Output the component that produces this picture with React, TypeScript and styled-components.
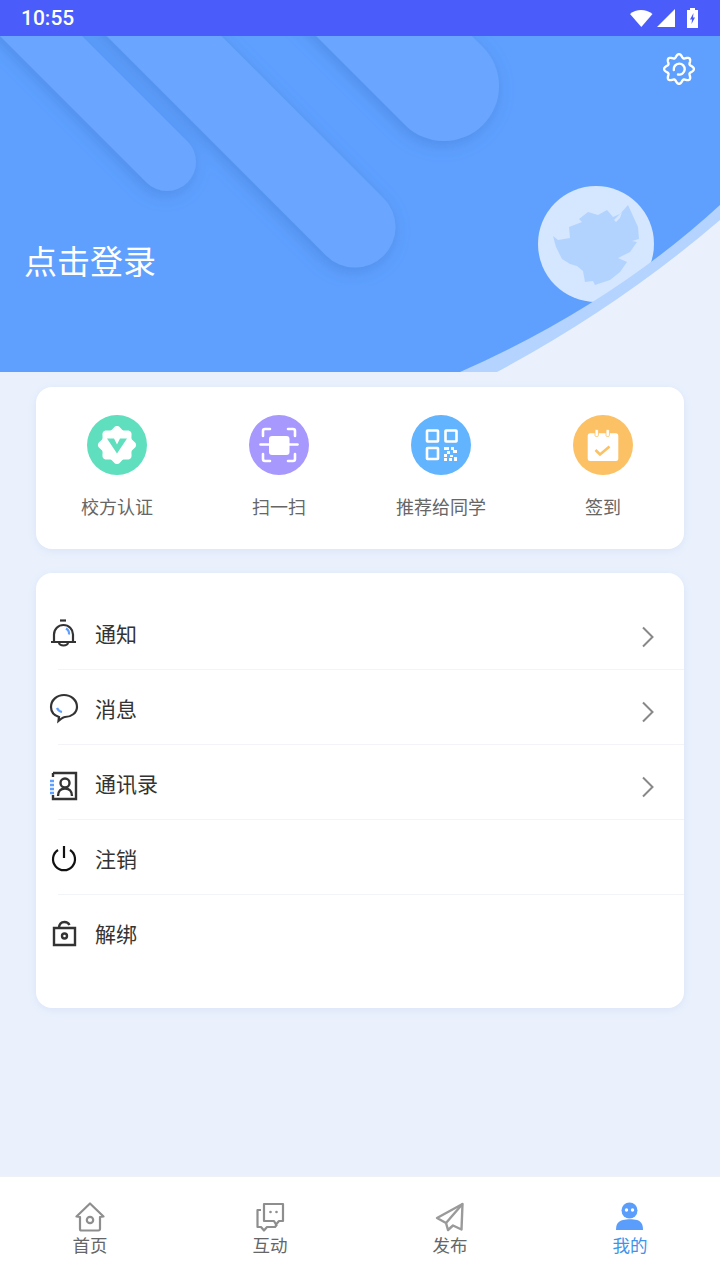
import React from "react";
import styled, { createGlobalStyle } from "styled-components";

const GlobalStyle = createGlobalStyle`
    html, body {
        margin: 0;
        padding: 0;
        background: #eaf1fd;
        font-family: "Noto Sans CJK SC", "Noto Sans", sans-serif;
    }
`

const Page = styled.div`
    width: 720px;
    height: 1280px;
    display: flex;
    flex-direction: column;
    background: #eaf1fd;
    overflow: hidden;
`

const StatusBar = styled.div`
    height: 36px;
    flex: none;
    display: flex;
    align-items: center;
    justify-content: space-between;
    padding: 0 22px 0 21px;
    background: #4a5cf9;
    color: #fff;
    font: 500 21px "Roboto", sans-serif;
`

const StatusIcons = styled.div`
    display: flex;
    align-items: center;
`

const Hero = styled.div`
    position: relative;
    height: 336px;
    flex: none;
    display: flex;
    flex-direction: column;
    align-items: flex-start;
    box-sizing: border-box;
    padding: 17px 25px 0 24px;
    background: #5fa0ff;
    overflow: hidden;
`

const HeroArt = styled.svg`
    position: absolute;
    left: 0;
    top: 0;
`

const SettingsIcon = styled.svg`
    position: relative;
    align-self: flex-end;
`

const LoginTitle = styled.div`
    position: relative;
    margin-top: 151px;
    font-size: 33px;
    line-height: 48px;
    color: #fff;
`

const Card = styled.div`
    margin: 0 36px;
    background: #fff;
    border-radius: 16px;
    box-shadow: 0 2px 8px rgba(90, 130, 200, 0.1);
`

const ActionsCard = styled(Card)`
    margin-top: 15px;
    height: 162px;
    box-sizing: border-box;
    padding-top: 28px;
    display: grid;
    grid-template-columns: repeat(4, 1fr);
`

const Action = styled.div`
    display: flex;
    flex-direction: column;
    align-items: center;
`

const ActionLabel = styled.div`
    margin-top: 18px;
    font-size: 18px;
    line-height: 26px;
    color: #666;
`

const ListCard = styled(Card)`
    margin-top: 24px;
    height: 435px;
    box-sizing: border-box;
    padding: 27px 0 0 14px;
`

const Row = styled.div`
    height: 69px;
    display: flex;
    align-items: center;
    padding-right: 29px;
`

const RowGap = styled.div`
    height: 5px;
`

const RowIcon = styled.svg`
    flex: none;
    margin-right: 17px;
    overflow: visible;
`

const RowLabel = styled.div`
    flex: 1;
    margin-top: -3px;
    font-size: 21px;
    line-height: 30px;
    color: #333;
`

const RowArrow = styled.svg`
    margin-top: 4px;
`

const Divider = styled.div`
    height: 1px;
    margin-left: 8px;
    background: #f3f4f7;
`

const BottomNav = styled.div`
    margin-top: auto;
    height: 104px;
    flex: none;
    box-sizing: border-box;
    padding-top: 25px;
    display: grid;
    grid-template-columns: repeat(4, 1fr);
    background: #fff;
    border-top: 1px solid #f0f1f4;
`

const NavItem = styled.div`
    display: flex;
    flex-direction: column;
    align-items: center;
`

const NavLabel = styled.div<{ $active?: boolean }>`
    margin-top: 1px;
    font-size: 17.5px;
    line-height: 24px;
    color: ${(p) => (p.$active ? "#3f94e9" : "#666")};
`

// wavy ring used by the settings gear and the badge
const scallop = (c: number, r: number, amp: number, n: number) => {
    let d = ""
    for (let i = 0; i <= 240; i++) {
        const a = (i / 240) * Math.PI * 2
        const rr = r + amp * Math.cos(n * a)
        const x = c + rr * Math.sin(a)
        const y = c - rr * Math.cos(a)
        d += `${i === 0 ? "M" : "L"}${x.toFixed(2)} ${y.toFixed(2)}`
    }
    return d + "Z"
}

const Chevron = () => (
    <RowArrow width="14" height="22" viewBox="0 0 14 22" fill="none" stroke="#888" strokeWidth="2">
        <path d="M2 1.5 L11.5 11 L2 20.5" />
    </RowArrow>
)

const listIcons: Record<string, React.ReactNode> = {
    bell: (
        <g fill="none" stroke="#333" strokeWidth="2.2" transform="translate(0 -2.5)">
            <path d="M10 3 H16" />
            <path d="M1 24.5 H26 M4 24 V17 a9.5 9.5 0 0 1 19 0 V24" />
            <path d="M9 25 a4.5 3 0 0 0 9 0" />
            <path d="M16 11 a6 6 0 0 1 3 6" stroke="#5fa0ff" />
        </g>
    ),
    chat: (
        <g fill="none" stroke="#333" strokeWidth="2.2" transform="translate(0 -2)">
            <path d="M9 24 C3 22 1 18 1 14 C1 7 7 2 14 2 C21 2 27 7 27 14 C27 20 21 24 15 24 C13 24 11 26 8.5 28 Z" />
            <path d="M7 15 a7 7 0 0 0 5 4" stroke="#5fa0ff" />
        </g>
    ),
    contact: (
        <g fill="none" stroke="#333" strokeWidth="2.4" transform="translate(0 1)">
            <path d="M3 2 H26 V28 H3 V24 M3 6 V2" />
            <circle cx="15" cy="12" r="4.5" />
            <path d="M8 25 C8 20 11 17.5 15 17.5 C19 17.5 22 20 22 25" />
            <path d="M0 10 H4 M0 14 H4 M0 18 H4 M0 22 H4" stroke="#5fa0ff" />
        </g>
    ),
    power: (
        <g fill="none" stroke="#111" strokeWidth="2.2" transform="translate(0 -2)">
            <path d="M8 7 a11 11 0 1 0 12 0" />
            <path d="M14 3 V15" />
        </g>
    ),
    lock: (
        <g fill="none" stroke="#333" strokeWidth="2.4" transform="translate(0 -2)">
            <path d="M4 10 H25 V27 H4 Z" />
            <path d="M9 10 C9 6 11 4 14.5 4 C17 4 18.5 5 19.5 7" />
            <circle cx="14.5" cy="18" r="2.5" />
        </g>
    ),
}

const rows = [
    { label: "通知", icon: "bell", arrow: true },
    { label: "消息", icon: "chat", arrow: true },
    { label: "通讯录", icon: "contact", arrow: true },
    { label: "注销", icon: "power", arrow: false },
    { label: "解绑", icon: "lock", arrow: false },
]

const actions: { label: string; bg: string; art: React.ReactNode }[] = [
    {
        label: "校方认证",
        bg: "#5fdfbd",
        art: (
            <>
                <path d={scallop(30, 17.5, 1.6, 8)} fill="#fff" />
                <path d="M20 23.5 H27 L30 29.5 L33 23.5 H40 L30 38.5 Z" fill="#5fdfbd" />
            </>
        ),
    },
    {
        label: "扫一扫",
        bg: "#a798fd",
        art: (
            <>
                <g fill="none" stroke="#fff" strokeWidth="2.6" strokeLinecap="round">
                    <path d="M14 21 V16 a2 2 0 0 1 2 -2 H21" />
                    <path d="M39 14 H44 a2 2 0 0 1 2 2 V21" />
                    <path d="M46 39 V44 a2 2 0 0 1 -2 2 H39" />
                    <path d="M21 46 H16 a2 2 0 0 1 -2 -2 V39" />
                    <path d="M11.5 29.5 H48.5" />
                </g>
                <rect x="20" y="21" width="20.5" height="19" rx="3" fill="#fff" />
            </>
        ),
    },
    {
        label: "推荐给同学",
        bg: "#62b4fe",
        art: (
            <>
                <g fill="none" stroke="#fff" strokeWidth="2.6">
                    <rect x="16" y="15.5" width="11" height="11" rx="0.5" />
                    <rect x="34.5" y="15.5" width="11" height="11" rx="0.5" />
                    <rect x="16" y="33" width="11" height="11" rx="0.5" />
                </g>
                <g fill="#fff">
                    <rect x="33" y="32" width="5" height="3" />
                    <rect x="40" y="32" width="3" height="3" />
                    <rect x="36" y="36" width="3" height="3" />
                    <rect x="42" y="35" width="4" height="3" />
                    <rect x="33" y="39" width="3" height="3" />
                    <rect x="39" y="40" width="3" height="2" />
                    <rect x="33" y="43" width="3" height="3" />
                    <rect x="38" y="43" width="3" height="3" />
                    <rect x="43" y="42" width="3" height="4" />
                </g>
            </>
        ),
    },
    {
        label: "签到",
        bg: "#fbc164",
        art: (
            <>
                <rect x="14.7" y="18.3" width="30.6" height="27.7" rx="2.5" fill="#fff" />
                <rect x="22" y="14.5" width="3.4" height="7" rx="1.2" fill="#fff" stroke="#fbc164" strokeWidth="0.8" />
                <rect x="33" y="14.5" width="3.4" height="7" rx="1.2" fill="#fff" stroke="#fbc164" strokeWidth="0.8" />
                <path d="M22.5 35 L27 39.5 L36.5 31.5" fill="none" stroke="#fbc164" strokeWidth="2.6" />
            </>
        ),
    },
]

const NavHome = () => (
    <svg width="30" height="30" viewBox="0 0 30 30" fill="none" stroke="#8e8e8e" strokeWidth="2.2" strokeLinejoin="round">
        <path d="M15 1.5 L1.5 14.5 L5 15 V27 a1.5 1.5 0 0 0 1.5 1.5 H23.5 a1.5 1.5 0 0 0 1.5 -1.5 V15 L28.5 14.5 Z" />
        <circle cx="15" cy="18" r="3.2" />
    </svg>
)

const NavChat = () => (
    <svg width="30" height="30" viewBox="0 0 30 30" fill="none" stroke="#8e8e8e" strokeWidth="2.2" strokeLinejoin="round">
        <path d="M9 2 H28 V19 H24 L21 22.5 L19 19 H9 Z" />
        <path d="M6 8 H2.5 V25 H6 L9 28.5 L12 25 H20 L22 22.5" />
        <circle cx="15.5" cy="10" r="1.3" fill="#8e8e8e" stroke="none" />
        <circle cx="21.5" cy="10" r="1.3" fill="#8e8e8e" stroke="none" />
    </svg>
)

const NavSend = () => (
    <svg width="30" height="30" viewBox="0 0 30 30" fill="none" stroke="#9a9a9a" strokeWidth="2.4" strokeLinejoin="round">
        <path d="M27.5 2 L2 16 L11 21 L13 28 L18 23.5 L26.5 27.5 Z" />
        <path d="M27.5 2 L11 21" />
    </svg>
)

const NavMe = () => (
    <svg width="30" height="30" viewBox="0 0 30 30">
        <circle cx="14.5" cy="8.5" r="8" fill="#5b9dfb" />
        <circle cx="11.5" cy="8" r="1.7" fill="#fff" />
        <circle cx="17.5" cy="8" r="1.7" fill="#fff" />
        <path d="M1 28 C1 22 3 19.5 8 18 C12 17 18 17 22 18 C26 19.5 28 22 28 28 Z" fill="#5b9dfb" />
    </svg>
)

const navItems = [
    { label: "首页", icon: <NavHome /> },
    { label: "互动", icon: <NavChat /> },
    { label: "发布", icon: <NavSend /> },
    { label: "我的", icon: <NavMe />, active: true },
]

export default function App() {
    return (
        <Page>
            <GlobalStyle />
            <StatusBar>
                <span>10:55</span>
                <StatusIcons>
                    <svg width="23" height="18" viewBox="0 0 23 18" fill="#fff">
                        <path d="M0 5 C6 -0.5 16 -0.5 22.5 5 L11.3 18 Z" />
                    </svg>
                    <svg width="18" height="18" viewBox="0 0 18 18" fill="#fff" style={{ marginLeft: 4 }}>
                        <path d="M18 0 V18 H0 Z" />
                    </svg>
                    <svg width="11" height="20" viewBox="0 0 11 20" style={{ marginLeft: 12 }}>
                        <path d="M3 0 H8 V2 H11 V20 H0 V2 H3 Z" fill="#fff" />
                        <path d="M6.5 5 L3 11.5 H5 L4.5 16 L8 9.5 H6 Z" fill="#4a5cf9" />
                    </svg>
                </StatusIcons>
            </StatusBar>

            <Hero>
                <HeroArt width="720" height="336" viewBox="0 0 720 336">
                    <defs>
                        <filter id="barShadow" x="-20%" y="-20%" width="140%" height="140%">
                            <feDropShadow dx="-2" dy="4" stdDeviation="9" floodColor="#3a70c4" floodOpacity="0.4" />
                        </filter>
                    </defs>
                    <g fill="none" stroke="#6aa6ff" strokeLinecap="round" filter="url(#barShadow)">
                        <path d="M-20 -61 L167 126" strokeWidth="58" />
                        <path d="M100 -64 L355 191" strokeWidth="81" />
                        <path d="M294 -100 L444 50" strokeWidth="110" />
                    </g>
                    <circle cx="596" cy="208" r="58" fill="#d5e6ff" />
                    <path
                        d="M553 200 L558 204 L570 202 L569 191 L582 186 L579 183 L588 176 L598 179 L607 174 L613 181 L620 178 L628 169 L638 191 L639 203 L632 205 L637 206 L630 216 L618 222 L627 226 L620 236 L610 244 L595 249 L593 245 L585 246 L583 235 L577 230 L570 228 L562 223 L556 211 Z"
                        fill="#b3d3ff"
                    />
                    <path d="M614 184 L622 176 L620 182 L616 186 Z" fill="#d5e6ff" />
                    <path d="M460 336 Q610 270 720 169 V336 Z" fill="#b5d3ff" />
                    <path d="M497 336 Q620 270 720 184 V336 Z" fill="#eaf1fd" />
                </HeroArt>
                <SettingsIcon width="32" height="32" viewBox="0 0 32 32" fill="none" stroke="#fff" strokeWidth="2.4" strokeLinecap="round">
                    <path d={scallop(16, 13.2, 1.7, 8)} />
                    <path d="M10.8 17 A5.5 5.5 0 1 1 15 21.5" />
                </SettingsIcon>
                <LoginTitle>点击登录</LoginTitle>
            </Hero>

            <ActionsCard>
                {actions.map((a) => (
                    <Action key={a.label}>
                        <svg width="60" height="60" viewBox="0 0 60 60">
                            <circle cx="30" cy="30" r="30" fill={a.bg} />
                            {a.art}
                        </svg>
                        <ActionLabel>{a.label}</ActionLabel>
                    </Action>
                ))}
            </ActionsCard>

            <ListCard>
                {rows.map((r, i) => (
                    <React.Fragment key={r.label}>
                        {i > 0 && <RowGap />}
                        <Row>
                            <RowIcon width="28" height="30" viewBox="0 0 28 30">
                                {listIcons[r.icon]}
                            </RowIcon>
                            <RowLabel>{r.label}</RowLabel>
                            {r.arrow && <Chevron />}
                        </Row>
                        {i < rows.length - 1 && <Divider />}
                    </React.Fragment>
                ))}
            </ListCard>

            <BottomNav>
                {navItems.map((n) => (
                    <NavItem key={n.label}>
                        {n.icon}
                        <NavLabel $active={n.active}>{n.label}</NavLabel>
                    </NavItem>
                ))}
            </BottomNav>
        </Page>
    )
}
